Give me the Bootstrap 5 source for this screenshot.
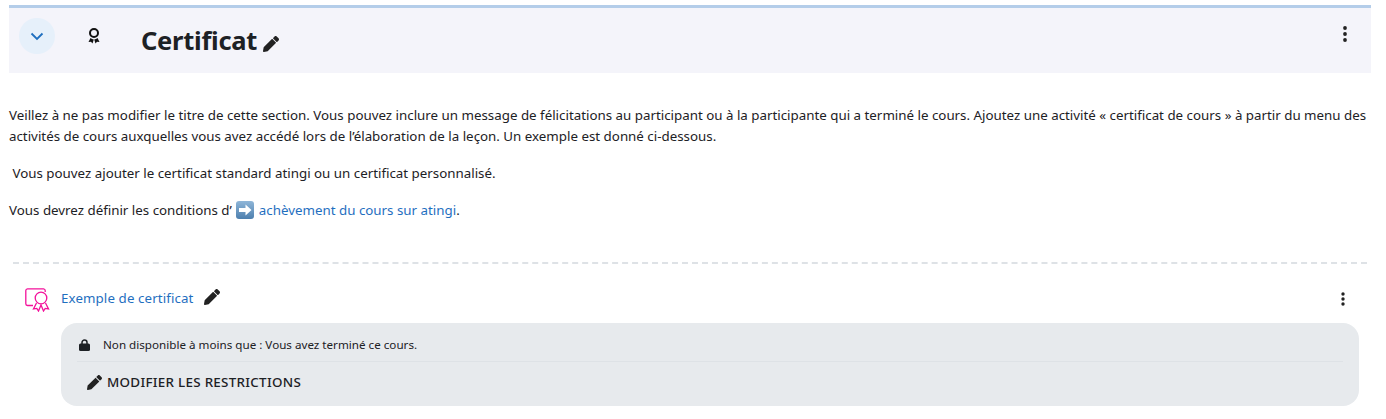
<!DOCTYPE html>
<html lang="fr">
<head>
  <meta charset="UTF-8" />
  <meta name="viewport" content="width=device-width, initial-scale=1.0"/>
  <title>Certificat</title>
  <link href="https://cdn.jsdelivr.net/npm/bootstrap@5.3.3/dist/css/bootstrap.min.css" rel="stylesheet">
  <style>
    body {
      font-family: "Noto Sans", "Liberation Sans", sans-serif;
      font-size: 13.33px;
      color: #1d2125;
      background: #fff;
    }
    a { color: #1f6fbf; text-decoration: none; }
    .page-wrap { padding: 5px 15px 0 9px; }
    .section-head {
      height: 68px;
      background: #f4f4fa;
      border-top: 3px solid #b4cde9;
      padding-top: 10px;
    }
    .toggle-circle {
      width: 36px; height: 36px;
      margin-left: 10px;
      background: #e6f0fa;
    }
    .medal-box { width: 86px; padding: 10px 0 0 33px; }
    .section-title {
      font-size: 25.5px;
      font-weight: 700;
      line-height: 32px;
      letter-spacing: -.25px;
      margin-top: 6px;
    }
    .title-edit { margin: 18px 0 0 6px; }
    .kebab-top { margin: 8px 24px 0 auto; }
    .section-text { padding-top: 32px; height: 189px; line-height: 21px; }
    .section-text p { margin-bottom: 16px; }
    .arrow-emoji { vertical-align: -4px; margin: 0 1px; }
    .activity-sep { border-top: 2px dashed #dee2e6; margin: 0 4px; }
    .activity-row { padding: 24px 26px 0 16px; height: 59px; }
    .activity-name { margin: 1px 0 0 10px; letter-spacing: .1px; }
    .edit-gap { margin: 1px 0 0 11px; }
    .kebab-low { margin: 4px 0 0 auto; }
    .restrict-box {
      margin: 0 12px 0 52px;
      height: 83px;
      background: #e7eaed;
      border-radius: 16px;
      padding: 0 16px;
    }
    .restrict-line { height: 39px; padding: 5px 0 0 2px; font-size: 11.65px; border-bottom: 1px solid #dee2e6; }
    .restrict-line span { margin-left: 13px; }
    .restrict-edit { height: 41px; padding-left: 10px; font-size: 13.4px; font-weight: 500; letter-spacing: .28px; }
    .restrict-edit span { margin-left: 5px; }
  </style>
</head>
<body>
  <div class="page-wrap">

    <!-- Section header -->
    <div class="section-head d-flex align-items-start">
      <div class="toggle-circle rounded-circle d-flex align-items-center justify-content-center">
        <svg width="14" height="9" viewBox="0 0 14 9"><path d="M1.5 1.5 7 7l5.5-5.5" fill="none" stroke="#1f6fbf" stroke-width="1.800"/></svg>
      </div>
      <div class="medal-box">
        <svg width="12" height="16" viewBox="0 0 12 16" class="d-block">
          <circle cx="6" cy="5" r="4" fill="none" stroke="#111" stroke-width="2"/>
          <path d="M2.500 10 .5 14l2.500-.3L4.500 15.500 5.800 11.600A6 6 0 0 1 2.500 10zM9.500 10l2 4-2.500-.3-1.500 1.800-1.300-3.900A6 6 0 0 0 9.500 10z" fill="#111"/>
        </svg>
      </div>
      <div class="section-title">Certificat</div>
      <svg width="16" height="16" viewBox="0 0 512 512" class="title-edit"><path d="M497.900 142.100l-46.100 46.100c-4.700 4.700-12.300 4.700-17 0l-111-111c-4.700-4.700-4.700-12.300 0-17l46.100-46.100c18.700-18.700 49.100-18.700 67.900 0l60.100 60.100c18.800 18.700 18.800 49.100 0 67.900zM284.200 99.800L21.600 362.400.4 483.900c-2.900 16.400 11.400 30.600 27.800 27.800l121.500-21.300 262.600-262.600c4.700-4.700 4.700-12.300 0-17l-111-111c-4.800-4.700-12.400-4.700-17.100 0z" fill="#222"/></svg>
      <svg width="4" height="16" viewBox="0 0 4 16" class="kebab-top d-block"><circle cx="2" cy="2" r="1.900" fill="#222"/><circle cx="2" cy="8" r="1.900" fill="#222"/><circle cx="2" cy="14" r="1.900" fill="#222"/></svg>
    </div>

    <!-- Section summary -->
    <div class="section-text">
      <p>Veillez à ne pas modifier le titre de cette section. Vous pouvez inclure un message de félicitations au participant ou à la participante qui a terminé le cours. Ajoutez une activité « certificat de cours » à partir du menu des activités de cours auxquelles vous avez accédé lors de l’élaboration de la leçon. Un exemple est donné ci-dessous.</p>
      <p>&nbsp;Vous pouvez ajouter le certificat standard atingi ou un certificat personnalisé.</p>
      <p>Vous devrez définir les conditions d’
        <svg width="18" height="18" viewBox="0 0 18 18" class="arrow-emoji">
          <defs><linearGradient id="emojiBg" x1="0" y1="0" x2="0" y2="1"><stop offset="0" stop-color="#8fb6d8"/><stop offset="1" stop-color="#4d7fae"/></linearGradient></defs>
          <rect width="18" height="18" rx="3" fill="url(#emojiBg)"/><path d="M3 7h6.500V3.500L15.500 9l-6 5.500V11H3z" fill="#fff"/>
        </svg>
        <a href="#">achèvement du cours sur atingi</a>.</p>
    </div>

    <div class="activity-sep"></div>

    <!-- Activity -->
    <div class="activity-row d-flex align-items-start">
      <svg width="26" height="24" viewBox="0 0 26 24" fill="none" stroke="#f3129b" stroke-width="1.300">
        <path d="M8 17.500H2.500A1.800 1.800 0 0 1 .8 15.700V2.500A1.800 1.800 0 0 1 2.500.8h16A1.800 1.800 0 0 1 20.200 2.500V4"/>
        <circle cx="16" cy="10" r="5.800"/>
        <path d="M11.500 15 8.500 21l3.300-.6 1.700 2.600 2.500-6 2.500 6 1.700-2.600 3.300.6-3-6"/>
      </svg>
      <a href="#" class="activity-name">Exemple de certificat</a>
      <svg width="16" height="16" viewBox="0 0 512 512" class="edit-gap"><path d="M497.900 142.100l-46.100 46.100c-4.700 4.700-12.300 4.700-17 0l-111-111c-4.700-4.700-4.700-12.300 0-17l46.100-46.100c18.700-18.700 49.100-18.700 67.900 0l60.100 60.100c18.800 18.700 18.800 49.100 0 67.900zM284.200 99.800L21.600 362.400.4 483.900c-2.900 16.400 11.400 30.600 27.800 27.800l121.500-21.300 262.600-262.600c4.700-4.700 4.700-12.300 0-17l-111-111c-4.800-4.700-12.400-4.700-17.100 0z" fill="#222"/></svg>
      <svg width="4" height="14" viewBox="0 0 4 14" class="kebab-low"><circle cx="2" cy="2" r="1.700" fill="#222"/><circle cx="2" cy="7" r="1.700" fill="#222"/><circle cx="2" cy="12" r="1.700" fill="#222"/></svg>
    </div>

    <div class="restrict-box">
      <div class="restrict-line d-flex align-items-center">
        <svg width="11" height="12" viewBox="0 0 11 12"><path d="M3 5V3.500a2.500 2.500 0 0 1 5 0V5" fill="none" stroke="#1d2125" stroke-width="1.500"/><rect y="4.500" width="11" height="7.500" rx="1.500" fill="#1d2125"/></svg>
        <span>Non disponible à moins que : Vous avez terminé ce cours.</span>
      </div>
      <div class="restrict-edit d-flex align-items-center">
        <svg width="15" height="15" viewBox="0 0 512 512"><path d="M497.900 142.100l-46.100 46.100c-4.700 4.700-12.300 4.700-17 0l-111-111c-4.700-4.700-4.700-12.300 0-17l46.100-46.100c18.700-18.700 49.100-18.700 67.900 0l60.100 60.100c18.800 18.700 18.800 49.100 0 67.900zM284.200 99.800L21.600 362.400.4 483.900c-2.900 16.400 11.400 30.600 27.800 27.800l121.500-21.300 262.600-262.600c4.700-4.700 4.700-12.300 0-17l-111-111c-4.800-4.700-12.400-4.700-17.100 0z" fill="#222"/></svg>
        <span>MODIFIER LES RESTRICTIONS</span>
      </div>
    </div>
  </div>
  <script src="https://cdn.jsdelivr.net/npm/bootstrap@5.3.3/dist/js/bootstrap.bundle.min.js"></script>
</body>
</html>
